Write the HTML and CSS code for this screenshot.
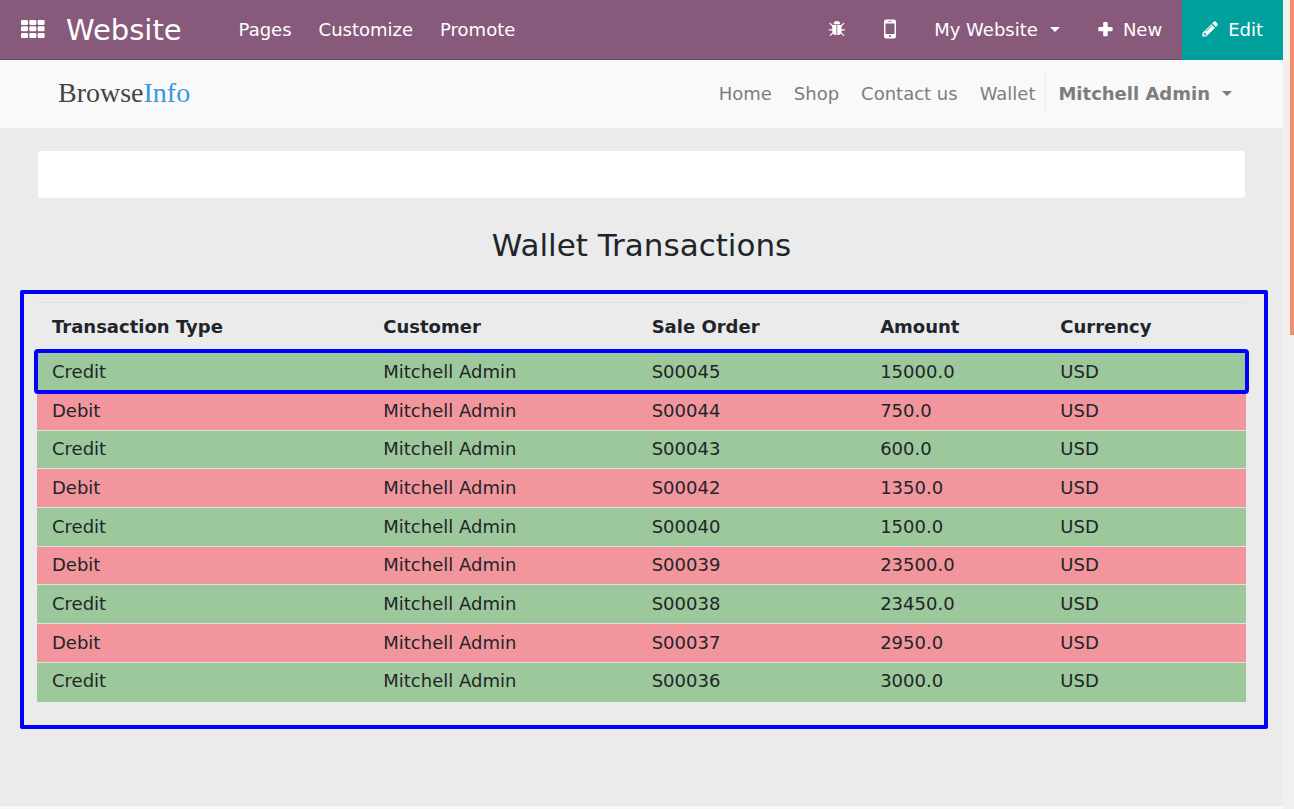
FILE: index.html
```html
<!DOCTYPE html>
<html lang="en">
<head>
<meta charset="utf-8">
<title>Wallet Transactions</title>
<link rel="stylesheet" href="styles.css">
</head>
<body>
<div class="page">
  <header class="toolbar">
    <button class="apps" aria-label="Applications">
      <svg width="24" height="20" viewBox="0 0 24 20" fill="currentColor"><rect x="0" y="1" width="7" height="5" rx="1.2"/><rect x="8.3" y="1" width="7" height="5" rx="1.2"/><rect x="16.6" y="1" width="7" height="5" rx="1.2"/><rect x="0" y="7.2" width="7" height="5" rx="1.2"/><rect x="8.3" y="7.2" width="7" height="5" rx="1.2"/><rect x="16.6" y="7.2" width="7" height="5" rx="1.2"/><rect x="0" y="14" width="7" height="5" rx="1.2"/><rect x="8.3" y="14" width="7" height="5" rx="1.2"/><rect x="16.6" y="14" width="7" height="5" rx="1.2"/></svg>
    </button>
    <a class="app-name" href="#">Website</a>
    <nav class="menus">
      <a href="#">Pages</a>
      <a href="#">Customize</a>
      <a href="#">Promote</a>
    </nav>
    <div class="tools">
      <button class="bug" aria-label="Debug">
        <svg width="18" height="20" viewBox="0 0 18 20" fill="none" stroke="currentColor" stroke-width="1.2"><path d="M5.7 5.2a3.2 3.2 0 0 1 6.4 0z" fill="currentColor" stroke="none"/><path d="M4.2 6.1h4.3v10H7.6c-2.2-.2-3.4-1.8-3.4-4.4zM9.3 6.1h4.3v5.6c0 2.6-1.2 4.2-3.4 4.4h-.9z" fill="currentColor" stroke="none"/><path d="M4.6 6.8 2 4.4M13.2 6.8l2.7-2.4M4.3 10.9H1.3M13.5 10.9H16.500M4.9 13.8l-2.6 2.6M13 13.8l2.6 2.6" stroke-linecap="round"/></svg>
      </button>
      <button class="mobile" aria-label="Mobile preview">
        <svg width="12" height="20" viewBox="0 0 12 20"><path fill="currentColor" fill-rule="evenodd" d="M2 .5h8A2 2 0 0 1 12 2.500v15a2 2 0 0 1-2 2H2a2 2 0 0 1-2-2v-15A2 2 0 0 1 2 .5zM1.500 4.400v10.500h9V4.400zM4.300 2v.7h3.400V2zM6 15.900a1.100 1.100 0 1 0 0 2.200 1.100 1.100 0 0 0 0-2.200z"/></svg>
      </button>
      <button class="site">My Website<span class="caret"></span></button>
      <button class="new">
        <svg width="15" height="16" viewBox="0 0 15 16"><path fill="currentColor" d="M6.200.9h2.500a1 1 0 0 1 1 1V6h3.900a1 1 0 0 1 1 1v2.200a1 1 0 0 1-1 1H9.700v4a1 1 0 0 1-1 1H6.200a1 1 0 0 1-1-1v-4H1.300a1 1 0 0 1-1-1V7a1 1 0 0 1 1-1h3.900V1.900a1 1 0 0 1 1-1z"/></svg>New</button>
      <button class="edit">
        <svg width="16" height="18" viewBox="0 0 16 18"><path fill="currentColor" fill-rule="evenodd" d="M9.300 4.300 13 8 4.200 16.600H.4v-3.700zM1.700 13.500v1h.9v1h1.100l.9-.9-2.100-2zM3.500 11.300l.5.500 5.700-5.700-.5-.5zM10.200 3.300l1.600-1.500c.6-.6 1.300-.6 1.900 0l1.700 1.700c.6.6.6 1.300 0 1.900L13.900 7z"/></svg>Edit</button>
    </div>
  </header>

  <header class="site-nav">
    <a class="logo" href="#">Browse<span class="logo-info">Info</span></a>
    <nav class="links">
      <a href="#">Home</a>
      <a href="#">Shop</a>
      <a href="#">Contact us</a>
      <a href="#">Wallet</a>
    </nav>
    <button class="user">Mitchell Admin<span class="caret"></span></button>
  </header>

  <main class="content">
    <div class="card"></div>
    <h1 class="heading">Wallet Transactions</h1>
    <section class="frame">
      <table class="transactions">
        <colgroup><col class="c-type"><col class="c-customer"><col class="c-order"><col class="c-amount"><col class="c-currency"></colgroup>
        <thead>
          <tr><th>Transaction Type</th><th>Customer</th><th>Sale Order</th><th>Amount</th><th>Currency</th></tr>
        </thead>
        <tbody>
          <tr class="credit selected"><td>Credit</td><td>Mitchell Admin</td><td>S00045</td><td>15000.0</td><td>USD</td></tr>
          <tr class="debit"><td>Debit</td><td>Mitchell Admin</td><td>S00044</td><td>750.0</td><td>USD</td></tr>
          <tr class="credit"><td>Credit</td><td>Mitchell Admin</td><td>S00043</td><td>600.0</td><td>USD</td></tr>
          <tr class="debit"><td>Debit</td><td>Mitchell Admin</td><td>S00042</td><td>1350.0</td><td>USD</td></tr>
          <tr class="credit"><td>Credit</td><td>Mitchell Admin</td><td>S00040</td><td>1500.0</td><td>USD</td></tr>
          <tr class="debit"><td>Debit</td><td>Mitchell Admin</td><td>S00039</td><td>23500.0</td><td>USD</td></tr>
          <tr class="credit"><td>Credit</td><td>Mitchell Admin</td><td>S00038</td><td>23450.0</td><td>USD</td></tr>
          <tr class="debit"><td>Debit</td><td>Mitchell Admin</td><td>S00037</td><td>2950.0</td><td>USD</td></tr>
          <tr class="credit"><td>Credit</td><td>Mitchell Admin</td><td>S00036</td><td>3000.0</td><td>USD</td></tr>
        </tbody>
      </table>
    </section>
  </main>
  <footer class="footer"></footer>
</div>
<div class="scrollbar"><div class="thumb"></div></div>
</body>
</html>
```
FILE: styles.css
```css
* { box-sizing: border-box; }

body {
  margin: 0;
  display: flex;
  min-height: 100vh;
  font: 18px/27px "DejaVu Sans", sans-serif;
  color: #212529;
  background: #ebebeb;
}

a { color: inherit; text-decoration: none; }

button {
  border: 0;
  padding: 0;
  background: none;
  color: inherit;
  font: inherit;
  display: flex;
  align-items: center;
}

.page { flex: 1; min-width: 0; display: flex; flex-direction: column; }

.toolbar {
  display: flex;
  align-items: stretch;
  height: 60px;
  padding-left: 21px;
  background: #875a7b;
  box-shadow: inset 0 -1px #68465f;
  color: #fff;
}

.toolbar button { padding-bottom: 2px; }
.app-name { margin-left: 21px; font-size: 29px; line-height: 60px; }
.menus { display: flex; gap: 27px; margin-left: 57px; line-height: 60px; }
.tools { display: flex; margin-left: auto; }
.mobile { margin-left: 38px; }
.site { margin-left: 38px; }
.toolbar .new { margin-left: 38px; padding-right: 20px; gap: 10px; }
.toolbar .edit { padding-left: 20px; padding-right: 20px; gap: 10px; background: #00a09d; }

.caret {
  margin-left: 12px;
  border: 5px solid transparent;
  border-top-color: currentColor;
  border-bottom: 0;
}

.site-nav {
  display: flex;
  align-items: center;
  height: 69px;
  padding: 0 51px 2px 58px;
  background: #f9f9f9;
  border-bottom: 1px solid #efefef;
  color: #7d7d7d;
}

.logo { font: 28px/32px "Liberation Serif", serif; color: #444; }
.logo-info { color: #3499dc; }
.links { display: flex; gap: 22px; margin-left: auto; }

.user {
  height: 48px;
  margin-left: 10px;
  padding-left: 12px;
  border-left: 1px solid #efefef;
  font-weight: bold;
}

.content { flex: 1; background: #ebebeb; }

.card {
  height: 51px;
  margin: 20px 37px 0;
  background: #fff;
  border: 1px solid #e9ecef;
  border-width: 2px 1px;
  border-radius: 5px;
}

.heading {
  margin: 26px 0;
  text-align: center;
  font-size: 31px;
  line-height: 38px;
  font-weight: normal;
}

.frame {
  margin: 0 15px 77px 20px;
  padding: 8px 18px 23px 13px;
  border: 4px solid #00f;
  border-radius: 2px;
}

.transactions {
  width: 100%;
  table-layout: fixed;
  border-collapse: separate;
  border-spacing: 0;
}

.c-type { width: 27.4%; }
.c-customer { width: 22.2%; }
.c-order { width: 18.9%; }
.c-amount { width: 14.9%; }
.c-currency { width: 16.6%; }

th, td {
  height: 39px;
  padding: 0 15px 2px;
  text-align: left;
  border-top: 1px solid #dee2e6;
}

th { height: 50px; }
tbody tr:nth-child(3n) td { height: 38px; }
tbody tr:last-child td { height: 40px; padding-bottom: 4px; }
.credit { background: #9dc89b; }
.debit { background: #f3959d; }
.selected { outline: 4px solid #00f; outline-offset: -1px; border-radius: 1px; }

.footer { height: 3px; background: #f8f8f8; }

.scrollbar { width: 11px; padding-left: 7px; background: #f1f0ee; }
.thumb { height: 335px; background: #f28e6a; }
```
